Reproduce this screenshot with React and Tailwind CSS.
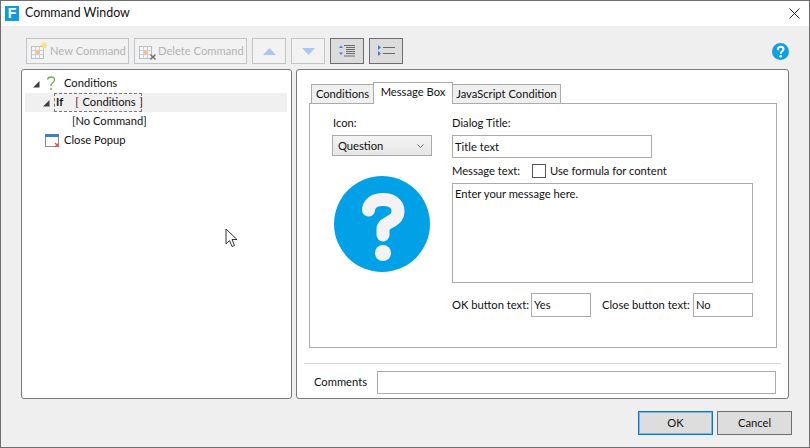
import React from "react";

const font = { fontFamily: 'Lato, "Open Sans", sans-serif' };

function Sort({ down }) {
  return (
    <svg width="13" height="9" viewBox="0 0 13 9">
      <path d={down ? "M0 1h13L6.5 8z" : "M6.5 1L13 8H0z"} fill="#a9c6f5" />
    </svg>
  );
}

function GridIcon({ kind }) {
  return (
    <svg width="20" height="20" viewBox="0 0 20 20" className="shrink-0">
      <rect x="1.5" y="5.5" width="12" height="12" fill="#f6f6f6" stroke="#b4bfce" />
      <path d="M1.5 9.500h12M1.500 13.500h12M5.500 5.500v12M9.500 5.500v12" stroke="#c8cfda" fill="none" />
      <rect x="6" y="9" width="4" height="4" fill="#f4c48c" />
      {kind === "new" ? (
        <path d="M14 1v7M10.500 4.500h7M11.500 2l5 5M16.500 2l-5 5" stroke="#f8e27a" strokeWidth="1.200" fill="none" />
      ) : (
        <path d="M12.500 13.500l5 5M17.500 13.500l-5 5" stroke="#707070" strokeWidth="1.400" fill="none" />
      )}
    </svg>
  );
}

function Caret() {
  return (
    <svg width="8" height="8" viewBox="0 0 8 8" className="shrink-0">
      <path d="M7.500 1v6.500H1z" fill="#404040" />
    </svg>
  );
}

export default function App() {
  return (
    <div style={font} className="relative flex h-[448px] w-[810px] flex-col overflow-hidden border border-[#6e6e6e] bg-[#efefef] text-[11.200px] text-[#111]">
      <div className="flex h-[25px] shrink-0 items-center bg-white pl-[4px] pr-[9px]">
        <div className="flex h-[15px] w-[14px] items-center justify-center bg-[#0e9be0] text-[14px] font-bold text-white" style={{ fontFamily: '"Liberation Sans", sans-serif' }}>F</div>
        <span className="ml-[6px] text-[12.400px] text-[#111]">Command Window</span>
        <svg className="ml-auto" width="11" height="11" viewBox="0 0 11 11">
          <path d="M.5.5l10 10M10.500.5l-10 10" stroke="#222" fill="none" />
        </svg>
      </div>

      <div className="flex h-[43px] shrink-0 items-start pl-[25px] pr-[20px] pt-[12px]">
        <div className="flex h-[26px] w-[103px] items-center border border-[#c4c4c4] bg-[#f2f2f2] pl-[3px] text-[#b4b4b4]">
          <GridIcon kind="new" />
          <span className="whitespace-nowrap">New Command</span>
        </div>
        <div className="ml-[5px] flex h-[26px] w-[113px] items-center border border-[#c4c4c4] bg-[#f2f2f2] pl-[3px] text-[#b4b4b4]">
          <GridIcon kind="del" />
          <span className="whitespace-nowrap">Delete Command</span>
        </div>
        <div className="ml-[5px] flex h-[26px] w-[34px] items-center justify-center border border-[#c4c4c4] bg-[#f2f2f2]"><Sort /></div>
        <div className="ml-[5px] flex h-[26px] w-[34px] items-center justify-center border border-[#c4c4c4] bg-[#f2f2f2]"><Sort down /></div>
        <div className="ml-[5px] flex h-[26px] w-[34px] items-center justify-center border border-[#6e6e6e] bg-[#dcdcdc]">
          <svg width="16" height="12" viewBox="0 0 16 12">
            <path d="M5 .5h11M7 2.500h9M7 4.500h9M7 6.500h9M7 8.500h9M5 11h11" stroke="#6a6a6a" fill="none" />
            <path d="M0 3l2-2.500L4 3zM0 7.500h4L2 10z" fill="#3e7fe0" />
          </svg>
        </div>
        <div className="ml-[5px] flex h-[26px] w-[34px] items-center justify-center border border-[#6e6e6e] bg-[#dcdcdc]">
          <svg width="17" height="12" viewBox="0 0 17 12">
            <path d="M5 2.500h12M5 8.500h12" stroke="#6a6a6a" fill="none" />
            <path d="M0 0l3 2.500L0 5zM0 6l3 2.500L0 11z" fill="#3e7fe0" />
          </svg>
        </div>
        <svg className="ml-auto mt-[5px]" width="17" height="17" viewBox="0 0 96 96">
          <circle cx="48" cy="48" r="48" fill="#0ea0e6" />
          <path d="M33 36c0-9 7-15 16-15 10 0 16 6 16 14 0 7-4 10-9 13-4 2-6 4-6 9" fill="none" stroke="#fff" strokeWidth="11" strokeLinecap="round" />
          <circle cx="49" cy="75" r="7.500" fill="#fff" />
        </svg>
      </div>

      <div className="flex h-[330px] shrink-0 gap-[4px] pl-[20px]">
        <div className="h-full w-[271px] rounded-[3px] border border-[#7a7a7a] bg-white pl-[3px] pt-[4px]">
          <div className="flex h-[19px] items-center pl-[7px]">
            <Caret />
            <svg width="10" height="15" viewBox="0 0 10 15" className="ml-[6px] shrink-0">
              <path d="M1.500 3.500C2 1.800 3.500 1 5 1c2 0 3.500 1.200 3.500 3 0 1.500-1 2.300-2 3-.9.700-1.500 1.300-1.500 2.500V10" fill="none" stroke="#6fa84f" strokeWidth="1.300" />
              <circle cx="5" cy="13" r="1" fill="#6fa84f" />
            </svg>
            <span className="ml-[8px]">Conditions</span>
          </div>
          <div className="flex h-[19px] w-[262px] items-center bg-[#f0f0f0] pl-[17px]">
            <Caret />
            <div className="ml-[4px] flex h-[19px] w-[88px] items-center whitespace-nowrap border border-dashed border-[#777] pl-[1px]">
              <span className="font-bold">If</span>
              <span className="ml-[12px] [word-spacing:1px]"><span className="text-[#5c1422]">[</span> Conditions <span className="text-[#5c1422]">]</span></span>
            </div>
          </div>
          <div className="flex h-[19px] items-center pl-[47px]">[No Command]</div>
          <div className="flex h-[19px] items-center pl-[20px]">
            <svg width="15" height="14" viewBox="0 0 15 14" className="shrink-0">
              <rect x=".5" y=".5" width="13" height="12" fill="#fff" stroke="#8a8a8a" />
              <rect x="0" y="0" width="14" height="3" fill="#3f7fd0" />
              <path d="M10 9l4 4M14 9l-4 4" stroke="#e2574c" strokeWidth="1.200" fill="none" />
            </svg>
            <span className="ml-[4px]">Close Popup</span>
          </div>
        </div>

        <div className="flex h-full w-[493px] flex-col rounded-[3px] border border-[#7a7a7a] bg-white pl-[12px] pr-[11px] pt-[12px]">
          <div className="flex h-[21px] items-end pl-[2px]">
            <div className="-mr-px flex h-[19px] w-[63px] items-center justify-center border border-b-0 border-[#ababab] bg-[#efefef]">Conditions</div>
            <div className="relative z-10 -mb-px flex h-[22px] w-[80px] items-center justify-center border border-b-0 border-[#ababab] bg-white pb-[3px]">Message Box</div>
            <div className="-ml-px flex h-[19px] w-[109px] items-center justify-center whitespace-nowrap border border-b-0 border-[#ababab] bg-[#efefef]">JavaScript Condition</div>
          </div>
          <div className="flex h-[245px] w-[468px] border border-[#ababab] pl-[22px] pt-[11px]">
            <div className="w-[100px] shrink-0">
              <div className="flex h-[17px] items-center pl-[1px]">Icon:</div>
              <div className="mt-[3px] flex h-[21px] w-[100px] items-center justify-between border border-[#ababab] bg-gradient-to-b from-[#f4f4f4] to-[#e6e6e6] pl-[5px] pr-[7px] pt-[1px]">
                <span>Question</span>
                <svg width="7" height="5" viewBox="0 0 7 5"><path d="M.5.500l3 3 3-3" stroke="#666" fill="none" /></svg>
              </div>
              <svg className="ml-[2px] mt-[20px]" width="96" height="96" viewBox="0 0 96 96">
                <circle cx="48" cy="48" r="48" fill="#00a1e6" />
                <path d="M34.500 34C35 27 41 23.500 49 23.500C58 23.500 64 28 64 35C64 42 59 44.500 54 47C50 49 49 51 49 53V59" fill="none" stroke="#f3f3f3" strokeWidth="13" strokeLinecap="round" />
                <circle cx="49" cy="77" r="8" fill="#f3f3f3" />
              </svg>
            </div>
            <div className="ml-[20px] w-[301px] shrink-0">
              <div className="flex h-[17px] items-center">Dialog Title:</div>
              <div className="mt-[3px] flex h-[23px] w-[200px] items-center border border-[#ababab] pl-[2px] pt-[1px]">Title text</div>
              <div className="mt-[5px] flex h-[16px] items-center">
                <span className="w-[80px]">Message text:</span>
                <span className="h-[14px] w-[14px] border border-[#555]" />
                <span className="ml-[4px]">Use formula for content</span>
              </div>
              <div className="mt-[4px] h-[100px] w-[301px] border border-[#ababab] pl-[2px] pt-[2px]">Enter your message here.</div>
              <div className="mt-[10px] flex h-[24px] items-center">
                <span className="w-[79px] whitespace-nowrap">OK button text:</span>
                <div className="flex h-[24px] w-[60px] items-center border border-[#ababab] pl-[2px]">Yes</div>
                <span className="ml-[11px] w-[91px] whitespace-nowrap">Close button text:</span>
                <div className="flex h-[24px] w-[60px] items-center border border-[#ababab] pl-[2px]">No</div>
              </div>
            </div>
          </div>
          <div className="-mx-[5px] mt-[15px] h-px w-[477px] bg-[#d4d4d4]" />
          <div className="mt-[7px] flex items-center pl-[5px]">
            <span className="w-[63px]">Comments</span>
            <div className="h-[23px] w-[399px] border border-[#ababab]" />
          </div>
        </div>
      </div>

      <div className="flex flex-1 items-start justify-end gap-[4px] pr-[17px] pt-[12px]">
        <div className="flex h-[24px] w-[75px] items-center justify-center border border-[#0078d7] bg-[#dddddd] outline outline-1 -outline-offset-2 outline-[#0078d7]/40">OK</div>
        <div className="flex h-[24px] w-[75px] items-center justify-center border border-[#6e6e6e] bg-[#dddddd]">Cancel</div>
      </div>

      <svg className="absolute left-[224px] top-[227px]" width="13" height="20" viewBox="0 0 13 20">
        <path d="M1 1v15l3.500-3.500 2.500 6 2.500-1-2.500-6H12z" fill="#fff" stroke="#333" strokeWidth="1" />
      </svg>
    </div>
  );
}
